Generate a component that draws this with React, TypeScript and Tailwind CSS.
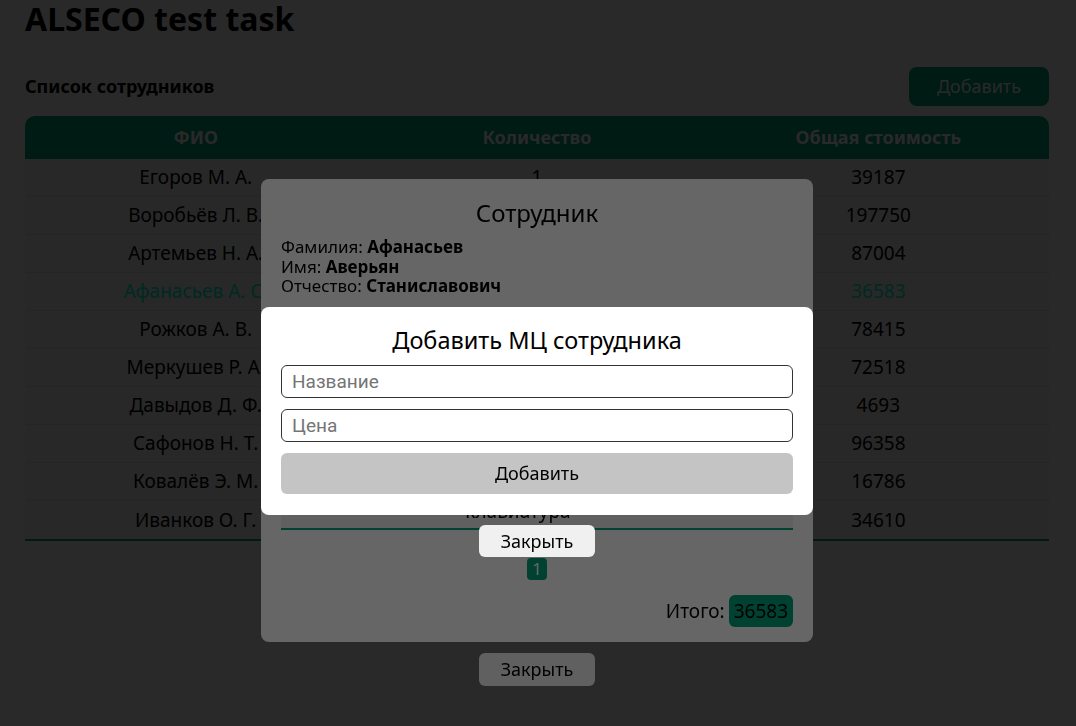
import React from "react";

const employees = [
  { name: "Егоров М. А.", qty: 1, total: 39187 },
  { name: "Воробьёв Л. В.", qty: 4, total: 197750 },
  { name: "Артемьев Н. А.", qty: 2, total: 87004 },
  { name: "Афанасьев А. С.", qty: 3, total: 36583, selected: true },
  { name: "Рожков А. В.", qty: 2, total: 78415 },
  { name: "Меркушев Р. А.", qty: 2, total: 72518 },
  { name: "Давыдов Д. Ф.", qty: 1, total: 4693 },
  { name: "Сафонов Н. Т.", qty: 3, total: 96358 },
  { name: "Ковалёв Э. М.", qty: 1, total: 16786 },
  { name: "Иванков О. Г.", qty: 2, total: 34610 },
];

const items = [
  { name: "Монитор", price: 24990 },
  { name: "Мышь", price: 2594 },
  { name: "клавиатура", price: 8999 },
];

export default function App() {
  return (
    <div className="relative min-h-screen bg-white pl-[25px] pr-[27px] font-['Noto_Sans',sans-serif] text-black">
      <h1 className="text-[32px] font-bold leading-[37px]">ALSECO test task</h1>
      <div className="mt-[30px] flex h-[39px] items-center justify-between">
        <h2 className="text-[18px] font-bold">Список сотрудников</h2>
        <button className="h-[39px] w-[140px] rounded-[8px] bg-[#00a27d] text-[18px] text-white">
          Добавить
        </button>
      </div>
      <div className="mt-[10px] border-b-2 border-[#00a27d]">
        <div className="grid h-[43px] grid-cols-3 items-center rounded-t-[10px] bg-[#00a27d] text-center text-[18px] font-bold text-white">
          <div>ФИО</div>
          <div>Количество</div>
          <div>Общая стоимость</div>
        </div>
        {employees.map((e, i) => (
          <div
            key={e.name}
            className={`grid h-[38px] grid-cols-3 items-center bg-[#fafafa] text-center text-[19px] ${
              i < employees.length - 1 ? "border-b border-[#e8e8e8]" : ""
            } ${e.selected ? "text-[#00ffd0]" : "text-black"}`}
          >
            <div>{e.name}</div>
            <div>{e.qty}</div>
            <div>{e.total}</div>
          </div>
        ))}
      </div>

      {/* Modal 1: employee */}
      <div className="fixed inset-0 flex flex-col items-center bg-black/60 pr-[2px] pt-[179px]">
        <div className="w-[552px] rounded-[8px] bg-white px-5 pb-[15px] pt-5">
          <div className="text-center text-[24px] leading-[28px]">Сотрудник</div>
          <div className="mt-[10px] text-[17px] leading-[19.5px]">
            <div>
              Фамилия: <b>Афанасьев</b>
            </div>
            <div>
              Имя: <b>Аверьян</b>
            </div>
            <div>
              Отчество: <b>Станиславович</b>
            </div>
          </div>
          <div className="mt-[26.5px] flex h-[39px] items-center justify-between">
            <div className="text-[18px] font-bold">Материальные ценности</div>
            <button className="h-[39px] rounded-[8px] bg-[#00a27d] px-4 text-[18px] text-white">
              Добавить МЦ
            </button>
          </div>
          <div className="mt-[10px] border-b-2 border-[#00a27d]">
            <div className="flex h-[43px] items-center justify-center rounded-t-[10px] bg-[#00a27d] pr-[38px] text-[18px] font-bold text-white">
              Название
            </div>
            {items.map((it, i) => (
              <div
                key={it.name}
                className={`flex h-[38px] items-center justify-center bg-[#f0f0f0] pr-[38px] pt-[4px] text-[19px] ${
                  i < items.length - 1 ? "border-b border-[#e0e0e0]" : ""
                }`}
              >
                {it.name}
              </div>
            ))}
          </div>
          <div className="mt-[28px] flex justify-center">
            <span className="flex h-[22px] w-[20px] items-center justify-center rounded-[4px] bg-[#00a27d] text-[17px] text-white">
              1
            </span>
          </div>
          <div className="mt-[15px] flex h-[32px] items-center justify-end gap-[4px] text-[19px]">
            <span>Итого:</span>
            <span className="flex h-[32px] items-center rounded-[6px] bg-[#00a27d] px-[5px]">36583</span>
          </div>
        </div>
        <button className="mt-[11px] h-[33px] w-[116px] rounded-[6px] bg-[#f0f0f0] text-[18px]">Закрыть</button>
      </div>

      {/* Modal 2: add item */}
      <div className="fixed inset-0 flex flex-col items-center bg-black/60 pr-[2px] pt-[307px]">
        <div className="flex w-[552px] flex-col gap-[11px] rounded-[8px] bg-white px-5 pb-[21px] pt-5">
          <div className="text-center text-[23.5px] leading-[27px]">Добавить МЦ сотрудника</div>
          <input
            placeholder="Название"
            className="h-[33px] rounded-[6px] border border-[#333] px-[10px] font-['Roboto',sans-serif] text-[19px] outline-none placeholder:text-[#757575]"
          />
          <input
            placeholder="Цена"
            className="h-[33px] rounded-[6px] border border-[#333] px-[10px] font-['Roboto',sans-serif] text-[19px] outline-none placeholder:text-[#757575]"
          />
          <button className="h-[41px] rounded-[6px] bg-[#c4c4c4] text-[18px]">Добавить</button>
        </div>
        <button className="mt-[10px] h-[32px] w-[116px] rounded-[6px] bg-[#f0f0f0] text-[18px]">Закрыть</button>
      </div>
    </div>
  );
}
